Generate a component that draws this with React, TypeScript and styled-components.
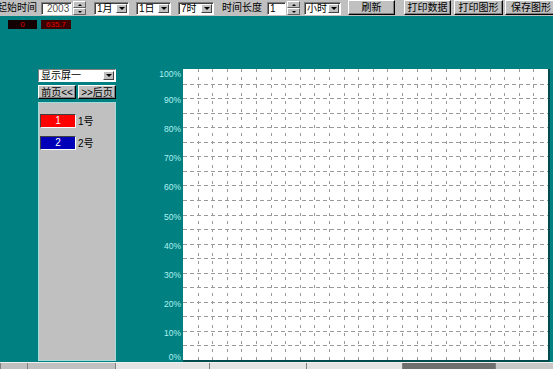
import styled, { createGlobalStyle } from 'styled-components';

const GlobalStyle = createGlobalStyle`
  html, body { margin: 0; padding: 0; overflow: hidden; }
  body { font-family: "Liberation Sans", "Noto Sans CJK SC", sans-serif; }
`

const Root = styled.div`
  width: 553px;
  height: 369px;
  display: flex;
  flex-direction: column;
  overflow: hidden;
  background: #008080;
`

// top tool strip
const Toolbar = styled.div`
  height: 16px;
  flex-shrink: 0;
  display: flex;
  align-items: flex-start;
  background: #c0c0c0;
  overflow: hidden;
  font-size: 10px;
  color: #000;
`

const Label = styled.span<{ $ml: number }>`
  flex-shrink: 0;
  width: 40px;
  margin-left: ${p => p.$ml}px;
  margin-top: 2px;
  line-height: 12px;
  white-space: nowrap;
`

const Field = styled.div<{ $ml: number, $w: number, $muted?: boolean }>`
  flex-shrink: 0;
  box-sizing: border-box;
  width: ${p => p.$w}px;
  height: 13px;
  margin-top: 2px;
  margin-left: ${p => p.$ml}px;
  padding-left: ${p => p.$muted ? 5 : 2}px;
  background: #fff;
  border-top: 1px solid #808080;
  border-left: 1px solid #808080;
  border-bottom: 1px solid #fff;
  border-right: 1px solid #fff;
  box-shadow: inset 1px 1px 0 #404040;
  line-height: 11px;
  color: ${p => p.$muted ? '#555' : '#000'};
  white-space: nowrap;
  overflow: hidden;
`

const SelectBox = styled(Field)`
  display: flex;
  align-items: center;
  justify-content: space-between;
  padding-right: 1px;
`

const DropBtn = styled.span`
  box-sizing: border-box;
  width: 11px;
  height: 9px;
  flex-shrink: 0;
  display: flex;
  align-items: center;
  justify-content: center;
  background: #c0c0c0;
  border-top: 1px solid #fff;
  border-left: 1px solid #fff;
  border-right: 1px solid #404040;
  border-bottom: 1px solid #404040;
  &::after {
    content: '';
    border-left: 3px solid transparent;
    border-right: 3px solid transparent;
    border-top: 3px solid #000;
  }
`

const Spinner = styled.div<{ $ml: number }>`
  flex-shrink: 0;
  width: 13px;
  height: 14px;
  margin-top: 1px;
  margin-left: ${p => p.$ml}px;
  display: flex;
  flex-direction: column;
`

const SpinBtn = styled.span<{ $up?: boolean }>`
  flex: 1;
  box-sizing: border-box;
  display: flex;
  align-items: center;
  justify-content: center;
  background: #c0c0c0;
  border-top: 1px solid #fff;
  border-left: 1px solid #fff;
  border-right: 1px solid #606060;
  border-bottom: 1px solid #606060;
  &::after {
    content: '';
    border-left: 2px solid transparent;
    border-right: 2px solid transparent;
    ${p => p.$up ? 'border-bottom: 2px solid #000;' : 'border-top: 2px solid #000;'}
  }
`

const ToolButton = styled.button<{ $ml: number, $w: number }>`
  flex-shrink: 0;
  box-sizing: border-box;
  width: ${p => p.$w}px;
  height: 15px;
  margin-left: ${p => p.$ml}px;
  padding: 0;
  background: #c0c0c0;
  border-top: 1px solid #fff;
  border-left: 1px solid #fff;
  border-right: 1px solid #000;
  border-bottom: 1px solid #000;
  box-shadow: inset -1px -1px 0 #808080;
  font: inherit;
  font-size: 10px;
  line-height: 12px;
  color: #000;
`

// teal working area
const Main = styled.div`
  flex: 1;
  display: flex;
  flex-direction: column;
`

const CounterRow = styled.div`
  display: flex;
  gap: 4px;
  margin-top: 4px;
  padding-left: 8px;
`

const Counter = styled.div<{ $bg: string, $w: number }>`
  width: ${p => p.$w}px;
  height: 9px;
  background: ${p => p.$bg};
  color: #e00000;
  font-size: 8px;
  line-height: 9px;
  text-align: center;
`

const Body = styled.div`
  display: flex;
  margin-top: 36px;
  padding-left: 38px;
`

const LeftCol = styled.div`
  width: 78px;
  padding-top: 4px;
  display: flex;
  flex-direction: column;
  gap: 3px;
`

const Combo = styled.div`
  box-sizing: border-box;
  height: 13px;
  display: flex;
  align-items: center;
  justify-content: space-between;
  padding: 0 1px 0 2px;
  background: #fff;
  border-top: 1px solid #808080;
  border-left: 1px solid #808080;
  border-bottom: 1px solid #fff;
  border-right: 1px solid #fff;
  font-size: 10px;
  line-height: 11px;
`

const PageRow = styled.div`
  display: flex;
  gap: 2px;
`

const PageButton = styled.button`
  flex: 1;
  box-sizing: border-box;
  height: 14px;
  padding: 0;
  background: #c0c0c0;
  border-top: 1px solid #fff;
  border-left: 1px solid #fff;
  border-right: 1px solid #000;
  border-bottom: 1px solid #000;
  box-shadow: inset -1px -1px 0 #808080;
  font: inherit;
  font-size: 10px;
  line-height: 11px;
  color: #000;
`

const LegendPanel = styled.div`
  box-sizing: border-box;
  height: 259px;
  padding: 10px 1px 0;
  display: flex;
  flex-direction: column;
  gap: 7px;
  background: #c0c0c0;
  border: 1px solid #a4dcdc;
`

const LegendItem = styled.div`
  display: flex;
  align-items: center;
  gap: 2px;
  font-size: 10px;
`

const Swatch = styled.div<{ $color: string }>`
  box-sizing: border-box;
  width: 36px;
  height: 14px;
  background: ${p => p.$color};
  border-top: 1px solid #404040;
  border-left: 1px solid #404040;
  border-bottom: 1px solid #fff;
  border-right: 1px solid #fff;
  color: #fff;
  text-align: center;
  line-height: 12px;
`

const ChartSvg = styled.svg`
  display: block;
  margin-left: 34px;
  flex-shrink: 0;
`

const StatusBar = styled.div`
  height: 6px;
  flex-shrink: 0;
  display: flex;
  background: #c0c0c0;
  border-top: 1px solid #f0f0f0;
`

const StatusCell = styled.div<{ $w: number, $tone: string }>`
  width: ${p => p.$w}px;
  flex-shrink: 0;
  background: ${p => p.$tone};
  border-left: 1px solid #808080;
`

const PLOT_X = 33
const PLOT_Y = 4
const PLOT_W = 365
const PLOT_H = 291

function Chart() {
  const rows = Array.from({ length: 19 }, (_, i) => PLOT_Y + (i + 1) * PLOT_H / 20)
  const cols = Array.from({ length: 24 }, (_, i) => PLOT_X + (i + 1) * PLOT_W / 25)
  const labels = Array.from({ length: 11 }, (_, k) => {
    const line = PLOT_Y + k * PLOT_H / 10
    return { text: `${100 - k * 10}%`, y: Math.min(Math.max(line + 2, 9), 292) }
  })

  return (
    <ChartSvg width={403} height={297} viewBox="0 0 403 297">
      <rect x={PLOT_X} y={PLOT_Y} width={PLOT_W + 2} height={PLOT_H + 2} fill="#004c4c" />
      <rect x={PLOT_X} y={PLOT_Y} width={PLOT_W} height={PLOT_H} fill="#fff" />
      {rows.map(y => (
        <line key={'h' + y} x1={PLOT_X} x2={PLOT_X + PLOT_W} y1={Math.round(y) + 0.5} y2={Math.round(y) + 0.5}
          stroke="#9a9a9a" strokeWidth={1} strokeDasharray="4 3" />
      ))}
      {cols.map(x => (
        <line key={'v' + x} x1={Math.round(x) + 0.5} x2={Math.round(x) + 0.5} y1={PLOT_Y} y2={PLOT_Y + PLOT_H}
          stroke="#9a9a9a" strokeWidth={1} strokeDasharray="3 5" />
      ))}
      {labels.map(l => (
        <text key={l.text} x={31} y={l.y} textAnchor="end" dominantBaseline="central"
          fontFamily="Liberation Sans, sans-serif" fontSize={8.5} fill="#aef2f2">{l.text}</text>
      ))}
    </ChartSvg>
  )
}

export default function App() {
  return (
    <Root>
      <GlobalStyle />
      <Toolbar>
        <Label $ml={-3}>起始时间</Label>
        <Field $ml={4} $w={31} $muted>2003</Field>
        <Spinner $ml={1}><SpinBtn $up /><SpinBtn /></Spinner>
        <SelectBox $ml={8} $w={35}>1月<DropBtn /></SelectBox>
        <SelectBox $ml={7} $w={35}>1日<DropBtn /></SelectBox>
        <SelectBox $ml={7} $w={36}>7时<DropBtn /></SelectBox>
        <Label $ml={8}>时间长度</Label>
        <Field $ml={5} $w={19}>1</Field>
        <Spinner $ml={1}><SpinBtn $up /><SpinBtn /></Spinner>
        <SelectBox $ml={4} $w={37}>小时<DropBtn /></SelectBox>
        <ToolButton $ml={7} $w={47}>刷新</ToolButton>
        <ToolButton $ml={9} $w={47}>打印数据</ToolButton>
        <ToolButton $ml={3} $w={49}>打印图形</ToolButton>
        <ToolButton $ml={2} $w={52}>保存图形</ToolButton>
      </Toolbar>
      <Main>
        <CounterRow>
          <Counter $bg="#140202" $w={29}>0</Counter>
          <Counter $bg="#3a0000" $w={30}>635.7</Counter>
        </CounterRow>
        <Body>
          <LeftCol>
            <Combo>显示屏一<DropBtn /></Combo>
            <PageRow>
              <PageButton>前页&lt;&lt;</PageButton>
              <PageButton>&gt;&gt;后页</PageButton>
            </PageRow>
            <LegendPanel>
              <LegendItem><Swatch $color="#ff0000">1</Swatch>1号</LegendItem>
              <LegendItem><Swatch $color="#0000b8">2</Swatch>2号</LegendItem>
            </LegendPanel>
          </LeftCol>
          <Chart />
        </Body>
      </Main>
      <StatusBar>
        <StatusCell $w={26} $tone="#c0c0c0" />
        <StatusCell $w={87} $tone="#c0c0c0" />
        <StatusCell $w={93} $tone="#e4e4e4" />
        <StatusCell $w={96} $tone="#e4e4e4" />
        <StatusCell $w={95} $tone="#e4e4e4" />
        <StatusCell $w={92} $tone="#6e6e6e" />
        <StatusCell $w={64} $tone="#c8c8c8" />
      </StatusBar>
    </Root>
  )
}
